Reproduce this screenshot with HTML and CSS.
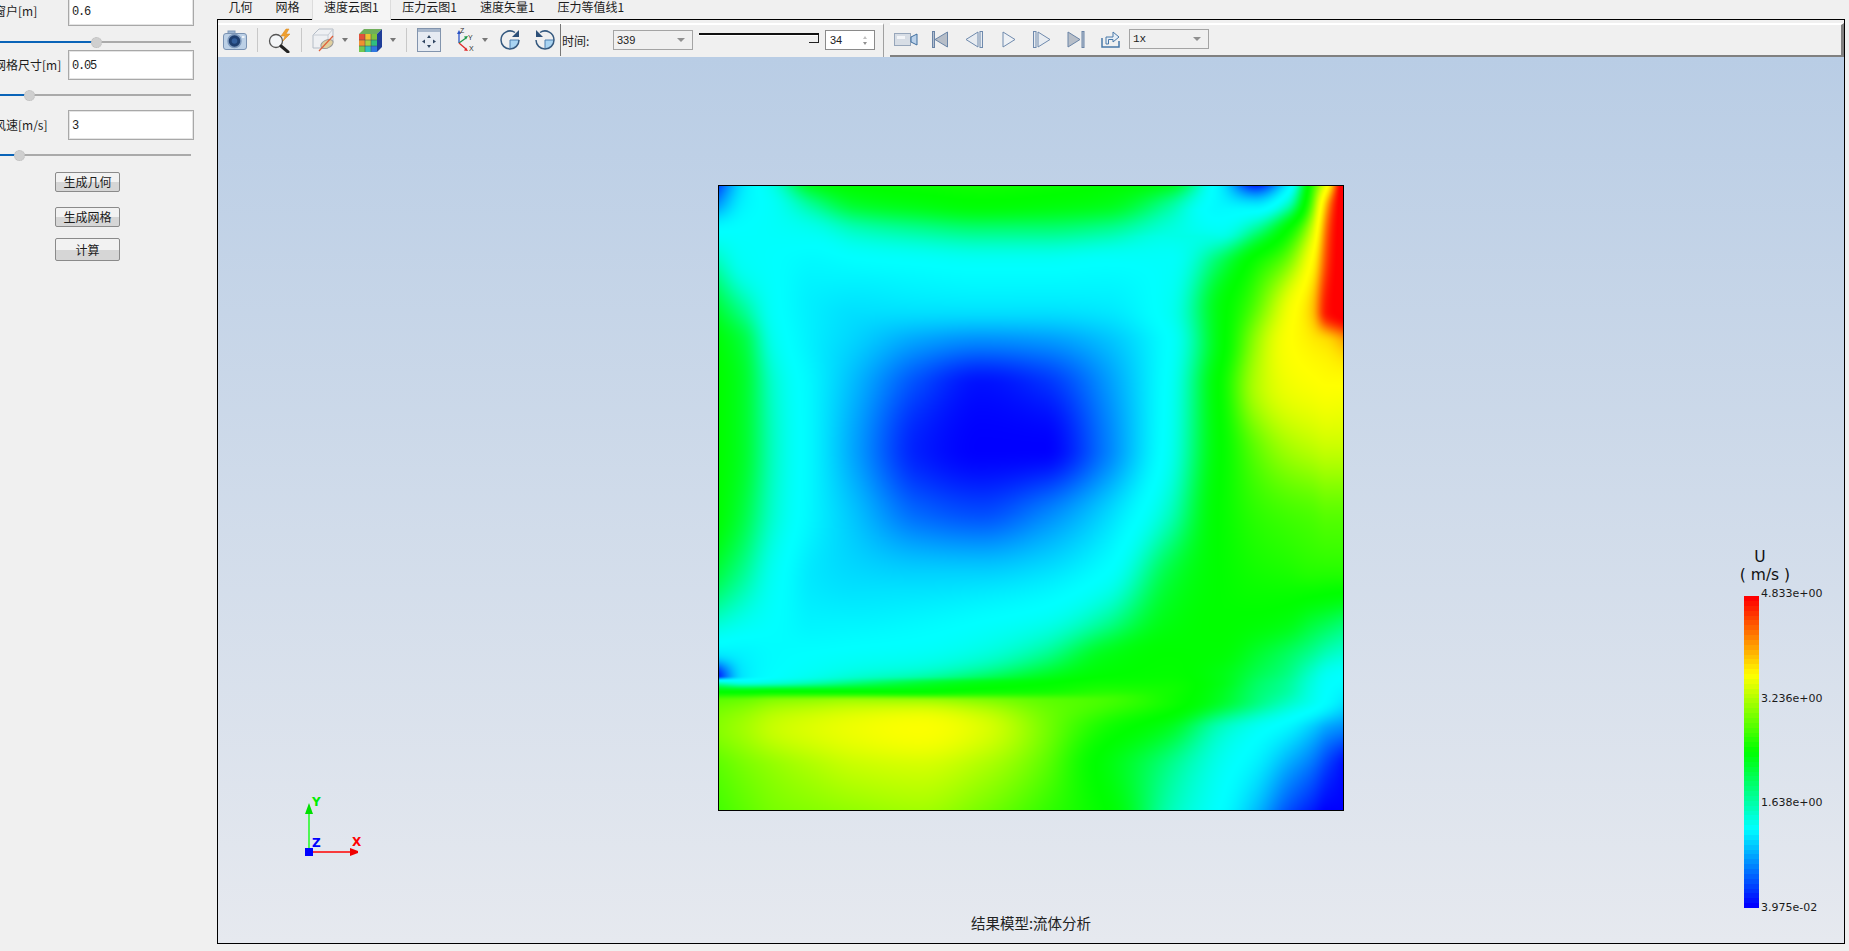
FILE: index.html
```html
<!DOCTYPE html>
<html lang="zh">
<head>
<meta charset="utf-8">
<title>流体分析</title>
<link rel="stylesheet" href="styles.css">
</head>
<body>
<div class="app">
  <aside class="panel">
    <div class="form">
      <div class="field"><span class="field-label">窗户[m]</span><div class="num">0.6</div></div>
      <div class="slider slider-tight"><i class="fill fill-a"></i><i class="thumb"></i></div>
      <div class="field"><span class="field-label">网格尺寸[m]</span><div class="num">0.05</div></div>
      <div class="slider"><i class="fill fill-b"></i><i class="thumb"></i></div>
      <div class="field"><span class="field-label">风速[m/s]</span><div class="num">3</div></div>
      <div class="slider"><i class="fill fill-c"></i><i class="thumb"></i></div>
    </div>
    <div class="actions">
      <div class="btn btn-a">生成几何</div>
      <div class="btn btn-b">生成网格</div>
      <div class="btn btn-c">计算</div>
    </div>
  </aside>
  <main class="main">
    <nav class="tabs">
      <span class="tab">几何</span><span class="tab">网格</span><span class="tab tab-on">速度云图1</span><span class="tab">压力云图1</span><span class="tab">速度矢量1</span><span class="tab">压力等值线1</span>
    </nav>
    <section class="frame">
      <div class="toolbar">
        <div class="tb tb-view">
          <svg class="ic ml5" width="24" height="20" viewBox="0 0 24 20"><rect x="5" y="1" width="7" height="4" fill="#9db5d2" stroke="#7f98b8"/><rect x=".5" y="3.5" width="23" height="16" rx="2.5" fill="#bcd0e6" stroke="#7a92b2"/><circle cx="11.5" cy="11" r="6.5" fill="#1f3f70" stroke="#7f9abd" stroke-width="1.5"/><circle cx="11.5" cy="11" r="2.8" fill="#345f9c"/><rect x="19" y="6" width="2.5" height="2" fill="#eef4fa"/></svg>
          <i class="sep ml10"></i>
          <svg class="ic ml9" width="25" height="25" viewBox="0 0 25 25"><circle cx="9" cy="13" r="6.5" fill="#f4f6f8" stroke="#555" stroke-width="1.300"/><path d="M14 18l7 6" stroke="#222" stroke-width="3" stroke-linecap="round"/><path d="M19 1l-5 7h4l-2 5 7-7h-4l3-5z" fill="#f0a030" stroke="#d98416" stroke-width=".5"/></svg>
          <i class="sep ml9"></i>
          <svg class="ic ml10" width="23" height="24" viewBox="0 0 23 24"><path d="M1 7l6-6h14v13l-5 6H1z" fill="#eef0f3" stroke="#b4bcc6"/><path d="M1 7h15v13M16 7l5-6" fill="none" stroke="#c6ccd4"/><ellipse cx="15" cy="16" rx="6.5" ry="4" transform="rotate(-25 15 16)" fill="#e0cf9e" stroke="#9a9a9a"/><path d="M7 23L21 8" stroke="#e0603a" stroke-width="1.200"/></svg>
          <i class="caret ml7"></i>
          <svg class="ic ml11" width="23" height="23" viewBox="0 0 23 23"><path d="M0 5l5-5h18l-5 5z" fill="#6fae5a"/><path d="M18 5l5-5v18l-5 5z" fill="#1f3d98"/><g><rect y="5" width="6" height="6" fill="#e2503a"/><rect x="6" y="5" width="6" height="6" fill="#f0c030"/><rect x="12" y="5" width="6" height="6" fill="#7ec23e"/><rect y="11" width="6" height="6" fill="#f09030"/><rect x="6" y="11" width="6" height="6" fill="#a8d040"/><rect x="12" y="11" width="6" height="6" fill="#30c080"/><rect y="17" width="6" height="6" fill="#70c850"/><rect x="6" y="17" width="6" height="6" fill="#30c0c0"/><rect x="12" y="17" width="6" height="6" fill="#2f78e0"/></g><path d="M6 5v18M12 5v18M0 11h18M0 17h18" stroke="#445" stroke-width=".5"/></svg>
          <i class="caret ml8"></i>
          <i class="sep ml10"></i>
          <svg class="ic ml10" width="24" height="24" viewBox="0 0 24 24"><rect x=".5" y=".5" width="23" height="23" fill="#e6ebf2" stroke="#8294ad"/><rect x="1" y="1" width="22" height="3" fill="#a9b8cc"/><g fill="#2f4560"><path d="M12 7l2 3h-4zM12 20l2-3h-4zM5 13.500l3-2v4zM19 13.500l-3-2v4z"/></g></svg>
          <svg class="ic ml14" width="20" height="24" viewBox="0 0 20 24"><path d="M4 15V5" stroke="#2b54c8" stroke-width="1.300"/><path d="M4 2l-2 4h4z" fill="#2b54c8"/><path d="M4 15l7-5" stroke="#1d9a4a" stroke-width="1.300"/><path d="M13 8l-4 .5 2 3z" fill="#1d9a4a"/><path d="M4 15l7 6" stroke="#e02828" stroke-width="1.300"/><path d="M13 23l-4-.5 2-3z" fill="#e02828"/><text x="5" y="5" class="ax">Z</text><text x="13" y="12" class="ax">Y</text><text x="14" y="23" class="ax">X</text></svg>
          <i class="caret ml7"></i>
          <svg class="ic ml11" width="22" height="22" viewBox="0 0 22 22"><path d="M11 11h8.500a8.500 8.500 0 0 1-8.500 8.500z" fill="#a9d4f2"/><path d="M11 11v8.500M11 11h9" stroke="#4c7fb0"/><path d="M2 11a9 9 0 0 0 18 0" fill="none" stroke="#35597f" stroke-width="1.500"/><path d="M2 11a9 9 0 0 1 14-7.500" fill="none" stroke="#35597f" stroke-width="1.500"/><path d="M20 1v7h-7z" fill="#2c4f78"/></svg>
          <svg class="ic ml13" width="22" height="22" viewBox="0 0 22 22"><path d="M11 11h8.500a8.500 8.500 0 0 1-8.500 8.500z" fill="#a9d4f2"/><path d="M11 11v8.500M11 11h9" stroke="#4c7fb0"/><path d="M2 11a9 9 0 0 0 18 0" fill="none" stroke="#35597f" stroke-width="1.500"/><path d="M20 11a9 9 0 0 0-14-7.500" fill="none" stroke="#35597f" stroke-width="1.500"/><path d="M2 1v7h7z" fill="#2c4f78"/></svg>
          <i class="vsep"></i>
          <span class="time-label">时间:</span>
          <div class="select select-time"><span class="sel-text">339</span><i class="caret caret-sm"></i></div>
          <div class="track"></div>
          <div class="spin"><span class="sel-text">34</span><span class="spin-arrows"><i class="up"></i><i class="down"></i></span></div>
        </div>
        <div class="tb tb-play">
          <svg class="ic ml4" width="24" height="13" viewBox="0 0 24 13"><rect x=".5" y=".5" width="16" height="12" fill="#d7dde5" stroke="#97a6ba"/><rect x="3" y="3" width="8" height="3" fill="#f3f5f8"/><path d="M17 4l6-3v11l-6-3z" fill="#bcd2ea" stroke="#3f6e9e"/></svg>
          <svg class="ic ml14" width="16" height="17" viewBox="0 0 16 17"><rect x=".5" y=".5" width="2" height="16" fill="#b4c0cf" stroke="#6a84a6"/><path d="M15.500 1v15L3 8.500z" fill="#b7bec8" stroke="#6a84a6"/></svg>
          <svg class="ic ml17" width="18" height="17" viewBox="0 0 18 17"><path d="M13 1v15L1 8.500z" fill="#e8ecf1" stroke="#6f8aad"/><rect x="15" y=".5" width="2.500" height="16" fill="#e8ecf1" stroke="#6f8aad"/></svg>
          <svg class="ic ml19" width="14" height="17" viewBox="0 0 14 17"><path d="M1 1v15l12-7.500z" fill="#eef1f5" stroke="#6f8aad"/></svg>
          <svg class="ic ml17" width="18" height="17" viewBox="0 0 18 17"><rect x=".5" y=".5" width="2.500" height="16" fill="#e8ecf1" stroke="#6f8aad"/><path d="M5 1v15l12-7.500z" fill="#e8ecf1" stroke="#6f8aad"/></svg>
          <svg class="ic ml16" width="18" height="17" viewBox="0 0 18 17"><path d="M1 1v15l12-7.500z" fill="#b7bec8" stroke="#6a84a6"/><rect x="15" y=".5" width="2" height="16" fill="#b4c0cf" stroke="#6a84a6"/></svg>
          <svg class="ic ml16" width="19" height="18" viewBox="0 0 19 18"><path d="M1 8v9h17v-6" fill="none" stroke="#4878a8" stroke-width="1.500"/><path d="M5 14V7h7V2l6 5-6 5V9.500H7.500V14z" fill="#e6eef6" stroke="#4878a8"/></svg>
          <div class="select select-speed"><span class="sel-text sel-mono">1x</span><i class="caret caret-sm"></i></div>
        </div>
      </div>
      <div class="view">
        <div class="plot"><canvas id="field" width="624" height="624"></canvas></div>
        <div class="legend">
          <div class="legend-title"><span>U</span><span class="legend-unit">( m/s )</span></div>
          <div class="legend-scale">
            <canvas id="bar" class="legend-bar" width="15" height="312"></canvas>
            <div class="legend-vals"><span>4.833e+00</span><span>3.236e+00</span><span>1.638e+00</span><span>3.975e-02</span></div>
          </div>
        </div>
        <svg class="triad" width="80" height="70" viewBox="0 0 80 70">
          <path d="M19 57V12" stroke="#00ff00" stroke-width="1.300"/>
          <path d="M19 8l-4 11h8z" fill="#00e000"/>
          <path d="M19 57h45" stroke="#ff0000" stroke-width="1.300"/>
          <path d="M60 53v8l8-3v-2z" fill="#f00000"/>
          <rect x="15" y="53" width="8" height="8" fill="#0000ff"/>
          <text x="22" y="11" class="tx tx-y">Y</text>
          <text x="62" y="51" class="tx tx-x">X</text>
          <text x="22" y="52" class="tx tx-z">Z</text>
        </svg>
        <div class="caption">结果模型:流体分析</div>
      </div>
    </section>
  </main>
</div>
<script src="app.js"></script>
</body>
</html>
```

FILE: styles.css
```css
* { box-sizing: border-box; }
html, body { margin: 0; height: 100%; overflow: hidden; }
body {
  background: #f0f0f0;
  color: #1c1c1c;
  font: 12px "Noto Sans CJK SC", "Liberation Sans", sans-serif;
}
.app { display: flex; height: 100vh; }

/* left panel */
.panel { width: 217px; flex: none; overflow: hidden; }
.form { margin: -4px 0 0 -6px; width: 200px; }
.field { display: flex; align-items: center; justify-content: space-between; height: 30px; }
.field-label { white-space: nowrap; font-size: 12px; line-height: 16px; }
.num {
  width: 126px; height: 30px; padding: 0 0 0 3px;
  border: 1px solid #a8a8a8; outline: 1px solid #e4e4e4; outline-offset: -2px;
  background: #fff;
  font: 12px/30px "Liberation Mono", monospace; letter-spacing: -1.200px;
}
.slider {
  position: relative; height: 12px; margin: 9px 3px 9px 0;
  background: linear-gradient(#aaa, #aaa) center / 100% 2px no-repeat;
  display: flex; align-items: center;
}
.slider-tight { margin: 10px 3px 2px 0; }
.fill { display: block; height: 2px; background: #0a64b8; }
.fill-a { width: 97.500px; }
.fill-b { width: 30.500px; }
.fill-c { width: 20.500px; }
.thumb { display: block; width: 11px; height: 11px; margin-left: -1px; border-radius: 50%; background: #cfcfcf; border: 1px dotted #bbb; }
.actions { display: flex; flex-direction: column; align-items: flex-start; padding: 2px 0 0 55px; }
.btn {
  width: 65px; text-align: center; line-height: 18px; font-size: 12px;
  border: 1px solid #8a8a8a; border-radius: 2px;
  background: linear-gradient(#f2f2f2 50%, #d6d6d6 50%);
}
.btn-a { height: 20px; }
.btn-b { height: 20px; margin-top: 15px; }
.btn-c { height: 23px; margin-top: 11px; line-height: 21px; }

/* tabs */
.main { flex: 1; display: flex; flex-direction: column; min-width: 0; }
.tabs { height: 19px; display: flex; flex: none; overflow: visible; }
.tab { padding: 0 11.500px; line-height: 14px; font-size: 12px; white-space: nowrap; }
.tab-on {
  height: 20px; position: relative; z-index: 1; margin-left: 1px;
  background: #f5f5f5; border: solid #dcdcdc; border-width: 0 1px; padding: 0 11px;
}

/* frame */
.frame {
  flex: 1; display: flex; flex-direction: column; min-height: 0;
  margin: 0 4px 7px 0; border: 1px solid #000;
}
.toolbar { display: flex; flex: none; height: 37px; padding-top: 3px; }
.tb { display: flex; align-items: center; height: 34px; border-top: 2px solid #fff; padding-bottom: 2px; }
.tb-view { width: 666px; border-right: 1px solid #a0a0a0; }
.tb-play { flex: 1; margin-left: 6px; border-bottom: 2px solid #808080; border-right: 3px solid #808080; }
.ic { flex: none; display: block; }
.ml4 { margin-left: 4px; } .ml5 { margin-left: 5px; } .ml7 { margin-left: 7px; } .ml8 { margin-left: 8px; }
.ml9 { margin-left: 9px; } .ml10 { margin-left: 10px; } .ml11 { margin-left: 11px; } .ml12 { margin-left: 12px; }
.ml13 { margin-left: 13px; } .ml14 { margin-left: 14px; } .ml15 { margin-left: 15px; } .ml16 { margin-left: 16px; }
.ml17 { margin-left: 17px; } .ml19 { margin-left: 19px; }
.ax { font: 7px "Liberation Sans", sans-serif; fill: #333; }
.sep { flex: none; width: 1px; height: 24px; background: #c8c8c8; }
.vsep { flex: none; width: 1px; height: 32px; margin: 0 0 0 4px; background: #777; }
.caret { flex: none; width: 0; height: 0; border: solid transparent; border-width: 4px 3.500px 0; border-top-color: #777; }
.caret-sm { border-width: 4px 4px 0; border-top-color: #909090; }
.time-label { margin-left: 1px; width: 51px; font-size: 12px; white-space: nowrap; }
.select {
  height: 20px; display: flex; align-items: center; justify-content: space-between;
  padding: 0 7px 0 3px; border: 1px solid #a4a4a4; background: #f0f0f0; flex: none;
}
.select-time { width: 80px; }
.select-speed { width: 80px; margin-left: 9px; }
.sel-text { font: 11px "Liberation Sans", sans-serif; color: #222; }
.sel-mono { font: 11px "Liberation Mono", monospace; }
.track {
  position: relative; flex: none; width: 120px; height: 2px; margin: 8px 6px 0 6px; align-self: flex-start;
  background: #111; box-shadow: 0 1px 0 #fff;
}
.track::after {
  content: ""; position: absolute; right: 0; top: 2px; width: 9px; height: 7px;
  border-right: 1px solid #222; border-bottom: 1px solid #222;
}
.spin {
  width: 50px; height: 20px; flex: none; display: flex; align-items: center; justify-content: space-between;
  padding: 0 7px 0 4px; border: 1px solid #8a8a8a; background: #fff;
}
.spin-arrows { display: flex; flex-direction: column; gap: 3px; }
.up, .down { display: block; width: 0; height: 0; border: solid transparent; border-width: 0 2.500px; }
.up { border-bottom: 3px solid #c0c0c0; }
.down { border-top: 3px solid #909090; }

/* view */
.view {
  position: relative; flex: 1; min-height: 0;
  display: flex; align-items: center; justify-content: center; padding-bottom: 4px;
  background: linear-gradient(#b9cde5, #e6e9ef);
}
.plot { border: 1px solid #000; line-height: 0; }
#field { display: block; }
.legend { position: absolute; left: 1502px; top: 491px; width: 110px; }
.legend-title { display: flex; flex-direction: column; align-items: center; width: 80px; font: 15.500px/18px "DejaVu Sans", sans-serif; color: #111; }
.legend-unit { position: relative; left: 5px; }
.legend-scale { display: flex; margin-top: 3px; }
.legend-bar { display: block; flex: none; width: 15px; height: 312px; margin: 9px 2px 0 24px; }
.legend-vals { display: flex; flex-direction: column; justify-content: space-between; height: 327px; font: 11px/13px "DejaVu Sans", sans-serif; color: #1a1a1a; }
.triad { position: absolute; left: 72px; top: 738px; }
.tx { font: bold 12px "DejaVu Sans", sans-serif; }
.tx-y { fill: #00ee00; }
.tx-x { fill: #ff0000; }
.tx-z { fill: #0000ff; }
.caption { position: absolute; left: 0; right: 0; bottom: 10px; text-align: center; font-size: 14.500px; line-height: 20px; color: #222; }
```

FILE: app.js
```js
var U = [0, .04, .09, .15, .22, .32, .42, .52, .62, .72, .80, .86, .91, .95, .975, 1];
var V = [0, .03, .07, .125, .2, .25, .32, .42, .52, .62, .70, .75, .785, .795, .81, .825, .87, .93, 1];
var G = [
  [.05,.2,.3,.45,.5,.52,.53,.52,.5,.45,.22,.03,.2,.55,.75,1.05],
  [.12,.22,.27,.36,.44,.47,.49,.48,.46,.36,.23,.2,.32,.6,.85,1.05],
  [.24,.25,.26,.28,.33,.36,.38,.38,.36,.30,.27,.36,.5,.68,.9,1.05],
  [.33,.27,.25,.23,.24,.25,.26,.26,.25,.26,.4,.53,.62,.76,.93,1.05],
  [.43,.36,.26,.21,.19,.19,.19,.19,.2,.27,.47,.6,.72,.82,.97,1.03],
  [.48,.42,.28,.21,.17,.12,.1,.11,.15,.25,.47,.64,.74,.78,.8,.84],
  [.5,.44,.31,.22,.14,.05,.01,.03,.11,.26,.5,.66,.72,.74,.75,.75],
  [.5,.44,.32,.22,.12,.02,0,0,.09,.27,.49,.6,.65,.67,.68,.68],
  [.49,.42,.31,.22,.15,.07,.05,.09,.17,.32,.5,.56,.58,.59,.6,.6],
  [.42,.36,.27,.2,.18,.17,.17,.19,.25,.42,.5,.53,.54,.55,.55,.55],
  [.31,.28,.25,.22,.22,.23,.25,.28,.36,.47,.5,.49,.47,.43,.41,.39],
  [.2,.22,.24,.25,.26,.27,.3,.36,.46,.5,.49,.44,.4,.36,.33,.31],
  [.03,.2,.25,.28,.31,.34,.39,.45,.5,.51,.47,.41,.37,.31,.27,.25],
  [.3,.28,.3,.33,.37,.42,.46,.49,.52,.52,.47,.4,.36,.3,.26,.24],
  [.49,.49,.5,.5,.5,.5,.52,.53,.55,.53,.46,.39,.35,.29,.25,.22],
  [.6,.61,.63,.64,.65,.65,.63,.6,.58,.53,.45,.38,.33,.28,.24,.2],
  [.63,.65,.68,.7,.72,.74,.7,.62,.53,.45,.33,.27,.22,.16,.12,.1],
  [.6,.62,.64,.66,.68,.69,.66,.6,.48,.37,.28,.21,.13,.08,.04,.01],
  [.58,.6,.62,.63,.64,.65,.62,.57,.5,.34,.25,.15,.06,.02,0,0]
];

function tangents(xs, ys) {
  var n = xs.length, d = [], m = [], i;
  for (i = 0; i < n - 1; i++) d[i] = (ys[i + 1] - ys[i]) / (xs[i + 1] - xs[i]);
  m[0] = d[0];
  m[n - 1] = d[n - 2];
  for (i = 1; i < n - 1; i++) {
    if (d[i - 1] * d[i] <= 0) { m[i] = 0; continue; }
    var h0 = xs[i] - xs[i - 1], h1 = xs[i + 1] - xs[i];
    m[i] = (h0 + h1) * 3 / ((2 * h1 + h0) / d[i - 1] + (h1 + 2 * h0) / d[i]);
  }
  return m;
}
function hermite(xs, ys, m, x) {
  var i = 0;
  while (i < xs.length - 2 && x > xs[i + 1]) i++;
  var h = xs[i + 1] - xs[i], t = (x - xs[i]) / h, t2 = t * t, t3 = t2 * t;
  return (2 * t3 - 3 * t2 + 1) * ys[i] + (t3 - 2 * t2 + t) * h * m[i] +
    (-2 * t3 + 3 * t2) * ys[i + 1] + (t3 - t2) * h * m[i + 1];
}
function rainbow(v, soft) {
  v = Math.max(0, Math.min(1, v)) * 4;
  var i = Math.min(3, Math.floor(v)), f = v - i, r = 0, g = 0, b = 0;
  if (soft) {
    if (i === 0) f = 1 - Math.pow(1 - f, 1.5);
    else f = f + (f * f * (3 - 2 * f) - f) * soft;
  }
  if (i === 0) { g = f; b = 1; }
  else if (i === 1) { g = 1; b = 1 - f; }
  else if (i === 2) { r = f; g = 1; }
  else { r = 1; g = 1 - f; }
  return [r * 255, g * 255, b * 255];
}

function drawField() {
  var cv = document.getElementById("field"), ctx = cv.getContext("2d");
  var W = cv.width, H = cv.height, img = ctx.createImageData(W, H), p = 0;
  var colT = U.map(function (_, c) {
    var col = G.map(function (row) { return row[c]; });
    return { ys: col, m: tangents(V, col) };
  });
  for (var y = 0; y < H; y++) {
    var vy = (y + .5) / H;
    var row = colT.map(function (c) { return hermite(V, c.ys, c.m, vy); });
    var mr = tangents(U, row);
    for (var x = 0; x < W; x++) {
      var c = rainbow(hermite(U, row, mr, (x + .5) / W), .7);
      img.data[p++] = c[0]; img.data[p++] = c[1]; img.data[p++] = c[2]; img.data[p++] = 255;
    }
  }
  ctx.putImageData(img, 0, 0);
}
function drawBar() {
  var cv = document.getElementById("bar"), ctx = cv.getContext("2d"), bands = 64;
  for (var i = 0; i < bands; i++) {
    var c = rainbow(1 - i / (bands - 1), 0);
    ctx.fillStyle = "rgb(" + c.map(Math.round).join(",") + ")";
    var y0 = Math.round(i * cv.height / bands), y1 = Math.round((i + 1) * cv.height / bands);
    ctx.fillRect(0, y0, cv.width, y1 - y0);
  }
}
drawField();
drawBar();
```
